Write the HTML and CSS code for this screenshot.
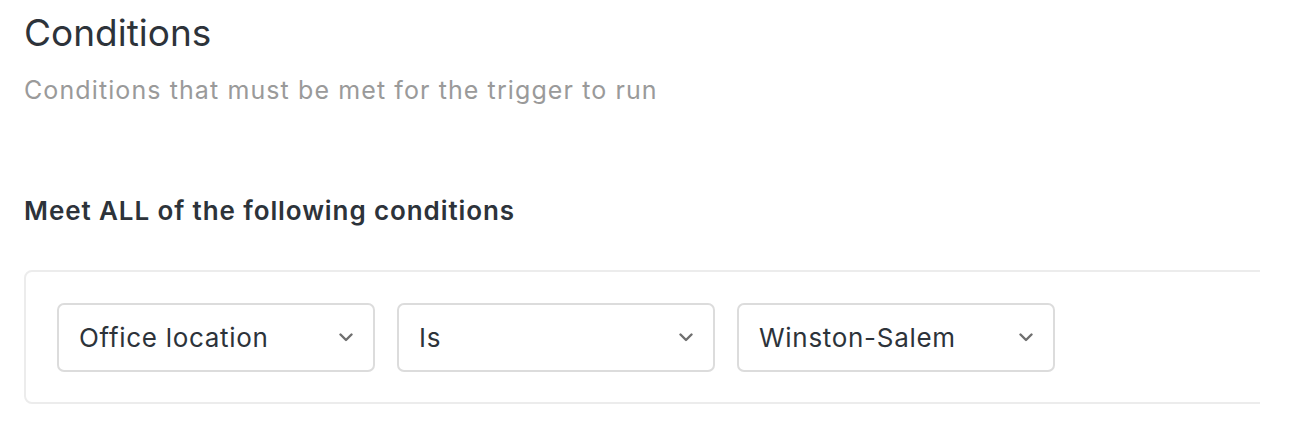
FILE: index.html
```html
<!DOCTYPE html>
<html>
<head>
<meta charset="utf-8">
<link rel="stylesheet" href="styles.css">
</head>
<body>
<div class="page">
  <h1 class="title">Conditions</h1>
  <p class="subtitle">Conditions that must be met for the trigger to run</p>
  <h2 class="label">Meet ALL of the following conditions</h2>
  <div class="card-clip">
    <div class="card">
      <div class="select">
        <span class="select-text">Office location</span>
        <svg class="chev" width="14" height="9" viewBox="0 0 14 9"><path d="M1.5 1.5 L7 7 L12.5 1.5" fill="none" stroke="#6f6f6f" stroke-width="2.4" stroke-linecap="round" stroke-linejoin="round"/></svg>
      </div>
      <div class="select">
        <span class="select-text">Is</span>
        <svg class="chev" width="14" height="9" viewBox="0 0 14 9"><path d="M1.5 1.5 L7 7 L12.5 1.5" fill="none" stroke="#6f6f6f" stroke-width="2.4" stroke-linecap="round" stroke-linejoin="round"/></svg>
      </div>
      <div class="select">
        <span class="select-text">Winston-Salem</span>
        <svg class="chev" width="14" height="9" viewBox="0 0 14 9"><path d="M1.5 1.5 L7 7 L12.5 1.5" fill="none" stroke="#6f6f6f" stroke-width="2.4" stroke-linecap="round" stroke-linejoin="round"/></svg>
      </div>
    </div>
  </div>
</div>
</body>
</html>
```

FILE: styles.css
```css
* { box-sizing: border-box; }
html, body { margin: 0; padding: 0; background: #fff; }
body { font-family: Inter, "Noto Sans", sans-serif; color: #2d333a; }
.page { padding: 11px 0 0 24px; width: 1260px; }
.title { margin: 0; font-size: 37px; line-height: 44px; font-weight: 400; color: #2d333a; }
.subtitle { margin: 19px 0 0; font-size: 25px; line-height: 32px; font-weight: 400; letter-spacing: 1.1px; color: #9a9a9a; }
.label { margin: 89px 0 0; font-size: 26px; line-height: 32px; font-weight: 600; letter-spacing: 0.9px; color: #2d333a; }
.card-clip { margin-top: 43px; overflow: hidden; }
.card { width: 1400px; height: 134px; border: 2px solid #ececec; border-radius: 8px; display: flex; align-items: center; gap: 22px; padding: 0 0 0 31px; }
.select { width: 318px; height: 69px; border: 2px solid #dcdcdc; border-radius: 7px; display: flex; align-items: center; justify-content: space-between; padding: 0 20px 0 20px; }
.select-text { font-size: 26px; letter-spacing: 0.7px; color: #2d333a; }
.chev { display: block; }
```
